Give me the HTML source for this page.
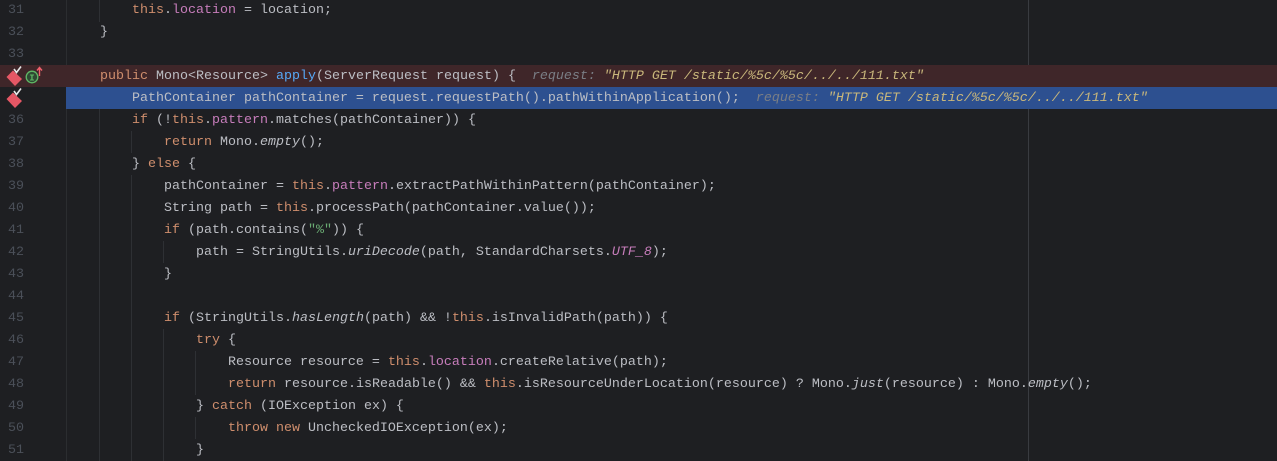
<!DOCTYPE html>
<html><head><meta charset="utf-8"><style>
html,body{margin:0;padding:0;background:#1e1f22;width:1277px;height:461px;overflow:hidden;}
body{position:relative;font-family:"Liberation Mono",monospace;font-size:13.33px;color:#bcbec4;}
.ln{position:absolute;left:0;width:1277px;height:22px;line-height:24px;white-space:pre;}
.num{position:absolute;left:8px;color:#4b5059;}
.code{position:absolute;left:68px;}
.k{color:#cf8e6d}.f{color:#c77dbb}.m{color:#56a8f5}.s{color:#6aab73}.i{font-style:italic}
.h{color:#7a7e85;font-style:italic}.hs{color:#c9b77b;font-style:italic}
.vl{position:absolute;width:1px;background:#2e3034;}
</style></head><body>
<div class="vl" style="left:66px;top:0;height:461px;background:#2b2d30"></div>
<div class="vl" style="left:1028px;top:0;height:461px;background:#393b40"></div>
<div class="ln" style="top:65px;background:#3f2629"></div>
<div class="ln" style="top:87px;background:#2d5090;left:66px"></div>
<div class="vl" style="left:99px;top:0;height:22px"></div>
<div class="vl" style="left:99px;top:109px;height:352px"></div>
<div class="vl" style="left:131px;top:131px;height:22px"></div>
<div class="vl" style="left:131px;top:175px;height:286px"></div>
<div class="vl" style="left:163px;top:241px;height:22px"></div>
<div class="vl" style="left:163px;top:329px;height:132px"></div>
<div class="vl" style="left:195px;top:351px;height:44px"></div>
<div class="vl" style="left:195px;top:417px;height:22px"></div>

<div class="ln" style="top:-1px"><span class="num">31</span><span class="code">        <span class="k">this</span>.<span class="f">location</span> = location;</span></div>
<div class="ln" style="top:21px"><span class="num">32</span><span class="code">    }</span></div>
<div class="ln" style="top:43px"><span class="num">33</span></div>
<div class="ln" style="top:65px"><span class="code">    <span class="k">public</span> Mono&lt;Resource&gt; <span class="m">apply</span>(ServerRequest request) {  <span class="h">request: </span><span class="hs">"HTTP GET /static/%5c/%5c/../../111.txt"</span></span></div>
<div class="ln" style="top:87px"><span class="code">        PathContainer pathContainer = request.requestPath().pathWithinApplication();  <span class="h">request: </span><span class="hs">"HTTP GET /static/%5c/%5c/../../111.txt"</span></span></div>
<div class="ln" style="top:109px"><span class="num">36</span><span class="code">        <span class="k">if</span> (!<span class="k">this</span>.<span class="f">pattern</span>.matches(pathContainer)) {</span></div>
<div class="ln" style="top:131px"><span class="num">37</span><span class="code">            <span class="k">return</span> Mono.<span class="i">empty</span>();</span></div>
<div class="ln" style="top:153px"><span class="num">38</span><span class="code">        } <span class="k">else</span> {</span></div>
<div class="ln" style="top:175px"><span class="num">39</span><span class="code">            pathContainer = <span class="k">this</span>.<span class="f">pattern</span>.extractPathWithinPattern(pathContainer);</span></div>
<div class="ln" style="top:197px"><span class="num">40</span><span class="code">            String path = <span class="k">this</span>.processPath(pathContainer.value());</span></div>
<div class="ln" style="top:219px"><span class="num">41</span><span class="code">            <span class="k">if</span> (path.contains(<span class="s">"%"</span>)) {</span></div>
<div class="ln" style="top:241px"><span class="num">42</span><span class="code">                path = StringUtils.<span class="i">uriDecode</span>(path, StandardCharsets.<span class="f i">UTF_8</span>);</span></div>
<div class="ln" style="top:263px"><span class="num">43</span><span class="code">            }</span></div>
<div class="ln" style="top:285px"><span class="num">44</span></div>
<div class="ln" style="top:307px"><span class="num">45</span><span class="code">            <span class="k">if</span> (StringUtils.<span class="i">hasLength</span>(path) &amp;&amp; !<span class="k">this</span>.isInvalidPath(path)) {</span></div>
<div class="ln" style="top:329px"><span class="num">46</span><span class="code">                <span class="k">try</span> {</span></div>
<div class="ln" style="top:351px"><span class="num">47</span><span class="code">                    Resource resource = <span class="k">this</span>.<span class="f">location</span>.createRelative(path);</span></div>
<div class="ln" style="top:373px"><span class="num">48</span><span class="code">                    <span class="k">return</span> resource.isReadable() &amp;&amp; <span class="k">this</span>.isResourceUnderLocation(resource) ? Mono.<span class="i">just</span>(resource) : Mono.<span class="i">empty</span>();</span></div>
<div class="ln" style="top:395px"><span class="num">49</span><span class="code">                } <span class="k">catch</span> (IOException ex) {</span></div>
<div class="ln" style="top:417px"><span class="num">50</span><span class="code">                    <span class="k">throw new</span> UncheckedIOException(ex);</span></div>
<div class="ln" style="top:439px"><span class="num">51</span><span class="code">                }</span></div>

<svg style="position:absolute;left:0;top:64px" width="60" height="46" viewBox="0 0 60 46">
 <g>
  <path d="M6.5 13 L13 6.5 L22 15 L15 22 Z" fill="#e55765"/>
  <path d="M14 5 L16.5 8.5 L21 2.5" stroke="#e8e8e8" stroke-width="1.6" fill="none"/>
  <circle cx="32" cy="13" r="5.8" fill="#2f4a33" stroke="#5fb865" stroke-width="1.3"/>
  <text x="32" y="16.5" font-family="Liberation Mono,monospace" font-size="9" font-weight="bold" fill="#5fb865" text-anchor="middle">I</text>
  <path d="M39.5 12 V4 M37 6.5 L39.5 3.5 L42 6.5" stroke="#f0616d" stroke-width="1.4" fill="none"/>
 </g>
 <g transform="translate(0,22)">
  <path d="M6.5 13 L13 6.5 L22 15 L15 22 Z" fill="#e55765"/>
  <path d="M14 5 L16.5 8.5 L21 2.5" stroke="#e8e8e8" stroke-width="1.6" fill="none"/>
 </g>
</svg>
</body></html>
